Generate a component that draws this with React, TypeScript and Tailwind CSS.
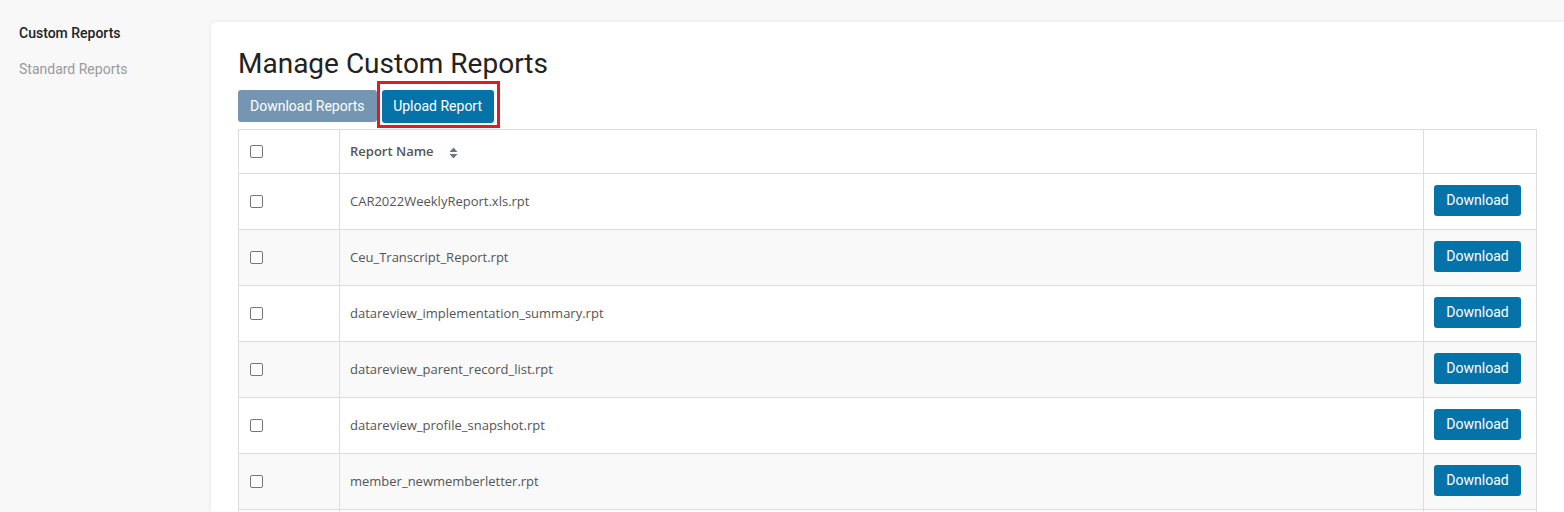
import type { FC } from "react";

const reports = [
  "CAR2022WeeklyReport.xls.rpt",
  "Ceu_Transcript_Report.rpt",
  "datareview_implementation_summary.rpt",
  "datareview_parent_record_list.rpt",
  "datareview_profile_snapshot.rpt",
  "member_newmemberletter.rpt",
];

const SortIcon: FC = () => (
  <svg width="9" height="12" viewBox="0 0 9 12" className="ml-[15px] mt-[2px]">
    <path d="M4.5 0.5 L8.5 5 H0.5 Z" fill="#6b7583" />
    <path d="M4.5 11.5 L8.5 7 H0.5 Z" fill="#6b7583" />
  </svg>
);

const Checkbox: FC = () => (
  <span className="block w-[13px] h-[13px] border border-[#767676] rounded-[2px] bg-white" />
);

export default function App() {
  return (
    <div className="flex h-[512px] overflow-hidden bg-[#f8f8f8] font-['Roboto',sans-serif]">
      <aside className="w-[211px] shrink-0 pl-[19px] pt-[25px] text-[14px]">
        <div className="font-medium text-[#222] leading-[16px]">Custom Reports</div>
        <div className="mt-[20px] text-[#9a9a9a] leading-[16px]">Standard Reports</div>
      </aside>
      <main className="flex-1 mt-[22px] mr-[-20px] bg-white rounded-t-[6px] shadow-[0_0_4px_rgba(0,0,0,0.08)] pl-[27px] pr-[48px] pt-[25px]">
        <h1 className="text-[28px] leading-[34px] text-[#222]">Manage Custom Reports</h1>
        <div className="flex items-center gap-[5px] mt-[9px] h-[32px]">
          <button className="h-[32px] px-[12px] rounded-[3px] bg-[#7596b2] text-white text-[14px] font-normal">
            Download Reports
          </button>
          <div className="relative">
            <button className="h-[33px] w-[112px] rounded-[3px] bg-[#0673a8] text-white text-[14px] font-normal">
              Upload Report
            </button>
            <span className="absolute left-[-5px] right-[-6px] top-[-9px] bottom-[-5px] border-[3px] border-[#e01b24] pointer-events-none" />
          </div>
        </div>
        <table className="mt-[7px] w-[calc(100%+1px)] border-collapse font-['Open_Sans',sans-serif] text-[13px] text-[#555]">
          <thead>
            <tr className="h-[44px] bg-white">
              <th className="w-[101px] border border-[#ddd] pl-[11px] text-left align-middle">
                <Checkbox />
              </th>
              <th className="border border-[#ddd] pl-[10px] text-left font-semibold align-middle">
                <div className="flex items-center">
                  <span>Report Name</span>
                  <SortIcon />
                </div>
              </th>
              <th className="w-[113px] border border-[#ddd]" />
            </tr>
          </thead>
          <tbody>
            {reports.map((name, i) => (
              <tr key={name} className={i % 2 === 1 ? "h-[56px] bg-[#f9f9f9]" : "h-[56px] bg-white"}>
                <td className="border border-[#ddd] pl-[11px] align-middle">
                  <Checkbox />
                </td>
                <td className="border border-[#ddd] pl-[10px] align-middle">{name}</td>
                <td className="border border-[#ddd] pl-[10px] align-middle">
                  <button className="block h-[31px] w-[87px] mb-[3px] rounded-[3px] bg-[#0673a8] text-white text-[14px] font-['Roboto',sans-serif] font-normal">
                    Download
                  </button>
                </td>
              </tr>
            ))}
            <tr className="h-[56px] bg-white">
              <td className="border border-[#ddd]" />
              <td className="border border-[#ddd]" />
              <td className="border border-[#ddd]" />
            </tr>
          </tbody>
        </table>
      </main>
    </div>
  );
}
